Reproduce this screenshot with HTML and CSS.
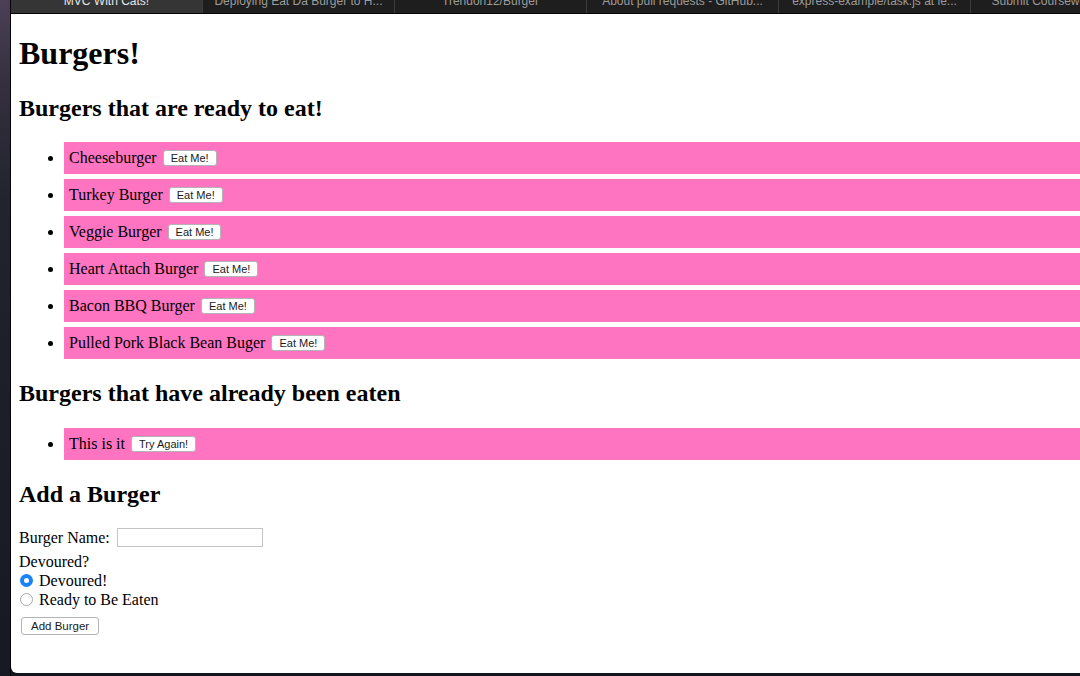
FILE: index.html
```html
<!DOCTYPE html>
<html lang="en">
<head>
<meta charset="utf-8">
<title>MVC With Cats!</title>
<link rel="stylesheet" href="styles.css">
</head>
<body>
<div class="desktop">
  <div class="side"></div>
  <div class="window">
    <div class="tabs">
      <div class="tab active"><span>MVC With Cats!</span></div>
      <div class="tab"><span>Deploying Eat Da Burger to H...</span></div>
      <div class="tab"><span>Trendon12/Burger</span></div>
      <div class="tab"><span>About pull requests - GitHub...</span></div>
      <div class="tab"><span>express-example/task.js at le...</span></div>
      <div class="tab"><span>Submit Coursework - Boot...</span></div>
    </div>
    <div class="page">
      <div class="content">
        <h1>Burgers!</h1>
        <h2>Burgers that are ready to eat!</h2>
        <ul class="burgers">
          <li class="burger"><div class="burger-row">Cheeseburger <button class="btn">Eat Me!</button></div></li>
          <li class="burger"><div class="burger-row">Turkey Burger <button class="btn">Eat Me!</button></div></li>
          <li class="burger"><div class="burger-row">Veggie Burger <button class="btn">Eat Me!</button></div></li>
          <li class="burger"><div class="burger-row">Heart Attach Burger <button class="btn">Eat Me!</button></div></li>
          <li class="burger"><div class="burger-row">Bacon BBQ Burger <button class="btn">Eat Me!</button></div></li>
          <li class="burger"><div class="burger-row">Pulled Pork Black Bean Buger <button class="btn">Eat Me!</button></div></li>
        </ul>
        <h2>Burgers that have already been eaten</h2>
        <ul class="burgers eaten">
          <li class="burger"><div class="burger-row">This is it <button class="btn">Try Again!</button></div></li>
        </ul>
        <h2>Add a Burger</h2>
        <form class="add-form">
          <div class="name-row">
            <label for="bn">Burger Name:</label>
            <input id="bn" class="name-input" type="text">
          </div>
          <div class="question">Devoured?</div>
          <label class="radio-row"><input class="radio" type="radio" name="devoured" checked> Devoured!</label>
          <label class="radio-row"><input class="radio" type="radio" name="devoured"> Ready to Be Eaten</label>
          <button class="btn add-btn" type="button">Add Burger</button>
        </form>
      </div>
    </div>
    <div class="dock"></div>
  </div>
</div>
</body>
</html>
```

FILE: styles.css
```css
html, body {
  margin: 0;
  padding: 0;
  height: 100%;
  overflow: hidden;
  background: #15171f;
}

.desktop {
  display: flex;
  height: 676px;
  width: 1080px;
}

.side {
  flex: 0 0 10px;
  background: linear-gradient(#4b4056 0%, #35303f 12%, #22232f 30%, #1c1e29 60%, #171922 100%);
  border-right: 1px solid #050505;
}

.window {
  flex: 1;
  display: flex;
  flex-direction: column;
  min-width: 0;
  background: #15171f;
}

.tabs {
  flex: 0 0 13px;
  display: flex;
  background: #1e1e1e;
  border-bottom: 1px solid #050505;
  overflow: hidden;
  font-family: "Liberation Sans", Arial, sans-serif;
  font-size: 12px;
  color: #9b9b9b;
}

.tab {
  flex: 0 0 191px;
  border-right: 1px solid #3c3c3c;
  display: flex;
  justify-content: center;
  align-items: flex-start;
  overflow: hidden;
  white-space: nowrap;
}

.tab span {
  line-height: 3px;
  display: block;
}

.tab.active {
  background: #353535;
  color: #e6e6e6;
}

.page {
  flex: 1;
  background: #ffffff;
  border-bottom-left-radius: 6px;
  overflow: hidden;
  font-family: "Liberation Serif", "Times New Roman", serif;
  font-size: 16px;
  color: #000;
}

.content {
  margin: 8px -40px 8px 8px;
}

h1 {
  font-size: 32px;
  margin: 21.44px 0;
}

h2 {
  font-size: 24px;
  line-height: 28.6px;
  margin: 19.92px 0;
}

.burgers {
  margin: 16px 0;
  padding-left: 45px;
}

.burgers.eaten {
  margin-top: 17px;
}

.burger {
  display: list-item;
  list-style: disc outside;
  height: 32px;
  margin-bottom: 5px;
  padding-left: 5px;
  background: #ff74c1;
}

.burgers .burger:last-child {
  margin-bottom: 0;
}

.burger-row {
  display: flex;
  align-items: center;
  height: 32px;
  white-space: pre;
}

.btn {
  font-family: "Liberation Sans", Arial, sans-serif;
  font-size: 11px;
  color: #1a1a1a;
  background: #ffffff;
  border: 1px solid #b4b4b4;
  border-radius: 3px;
  height: 16px;
  padding: 0 7px;
  margin: 0 0 0 2px;
  line-height: 14px;
}

.add-form {
  display: flex;
  flex-direction: column;
  align-items: flex-start;
  margin-top: -1px;
}

.name-row {
  display: flex;
  align-items: center;
  gap: 7px;
  height: 21px;
}

.name-input {
  width: 146px;
  height: 19px;
  box-sizing: border-box;
  border: 1px solid #c4c4c4;
  margin: 0;
  padding: 0 2px;
}

.question {
  margin-top: 5px;
  line-height: 18px;
}

.radio-row {
  display: flex;
  align-items: center;
  height: 19px;
  white-space: pre;
}

.radio {
  appearance: none;
  -webkit-appearance: none;
  width: 13px;
  height: 13px;
  margin: 0 2px 0 1px;
  border: 1px solid #a9a9a9;
  border-radius: 50%;
  background: #fff;
  box-sizing: border-box;
}

.radio:checked {
  border: 4px solid #1a82fb;
  background: #fff;
}

.add-btn {
  margin-top: 8px;
  height: 18px;
  padding: 0 9px;
  font-size: 11.5px;
}

.dock {
  flex: 0 0 3px;
  background: #14161d;
}
```
